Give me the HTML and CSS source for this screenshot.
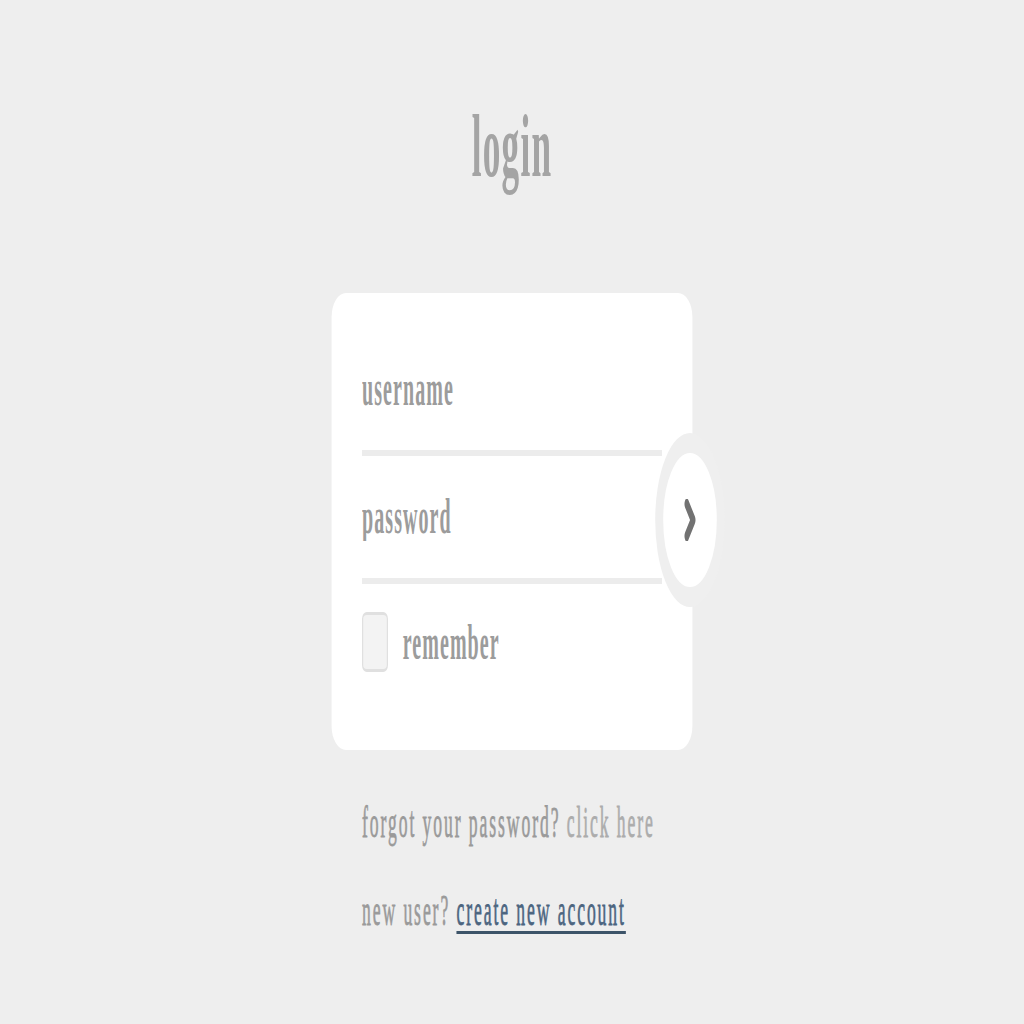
FILE: index.html
```html
<!DOCTYPE html>
<html lang="en">
<head>
<meta charset="utf-8">
<title>login</title>
<link rel="stylesheet" href="styles.css">
</head>
<body>
<div class="viewport">
<div class="stage">
  <h1 class="title">login</h1>
  <form class="card">
    <div class="field"><input class="input" type="text" placeholder="username"></div>
    <div class="field"><input class="input" type="password" placeholder="password"></div>
    <label class="remember"><input class="check" type="checkbox"><span class="remember-text">remember</span></label>
    <button class="go" type="button" aria-label="sign in">
      <svg class="chev" viewBox="0 0 32 42" width="32" height="42"><polyline points="8,5 24,21 8,37" fill="none" stroke="#727272" stroke-width="11" stroke-linecap="round" stroke-linejoin="round"/></svg>
    </button>
  </form>
  <div class="foot">
    <p class="foot-line">forgot your password? <a class="soft" href="#">click here</a></p>
    <p class="foot-line">new user? <a class="link" href="#">create new account</a></p>
  </div>
</div>
</div>
</body>
</html>
```
FILE: styles.css
```css
html, body {
  margin: 0;
  padding: 0;
  overflow: hidden;
  background: #eeeeee;
}
body {
  font-family: "Liberation Serif", "Times New Roman", serif;
  color: #999999;
}
.viewport {
  width: 1024px;
  height: 1024px;
  overflow: clip;
}
.stage {
  width: 2560px;
  transform: scaleX(0.4);
  transform-origin: 0 0;
  display: flex;
  flex-direction: column;
  align-items: center;
}
.title {
  margin: 103px 0 0;
  font-size: 88px;
  line-height: 1;
  font-weight: bold;
  letter-spacing: 3px;
  color: #a4a4a4;
}
.card {
  position: relative;
  box-sizing: border-box;
  width: 902px;
  margin: 102px 0 0;
  padding: 35px 76px 78px;
  background: #ffffff;
  border-radius: 36px / 24px;
  display: flex;
  flex-direction: column;
}
.field {
  padding: 35px 0 37px;
  border-bottom: 6px solid #ececec;
}
.input {
  display: block;
  width: 100%;
  height: 50px;
  padding: 0;
  margin: 0;
  border: 0;
  outline: none;
  background: transparent;
  font-family: inherit;
  font-size: 50px;
  font-weight: bold;
  line-height: 1;
  letter-spacing: 2.7px;
  color: #888888;
}
.input::placeholder {
  color: #9c9c9c;
  opacity: 1;
}
.remember {
  margin-top: 28px;
  height: 60px;
  display: flex;
  align-items: center;
  gap: 37px;
}
.check {
  appearance: none;
  -webkit-appearance: none;
  box-sizing: border-box;
  margin: 0;
  width: 65px;
  height: 60px;
  border: 3px solid #e0e0e0;
  border-radius: 12px / 7px;
  background: #f3f3f3;
}
.remember-text {
  font-size: 50px;
  font-weight: bold;
  line-height: 1;
  letter-spacing: 2.6px;
  color: #9c9c9c;
}
.go {
  position: absolute;
  left: 809px;
  top: 140px;
  box-sizing: border-box;
  width: 174px;
  height: 174px;
  padding: 0;
  border: 20px solid #efefef;
  border-radius: 50%;
  background: #ffffff;
  display: flex;
  align-items: center;
  justify-content: center;
}
.chev {
  display: block;
}
.foot {
  box-sizing: border-box;
  width: 902px;
  padding: 0 76px;
  margin-top: 51px;
}
.foot-line {
  margin: 0 0 44px;
  font-size: 44px;
  line-height: 1;
  letter-spacing: 4.8px;
  color: #9a9a9a;
  -webkit-text-stroke: 0.8px currentColor;
}
.soft {
  color: #acacac;
  text-decoration: none;
}
.link {
  color: #4c6580;
  text-decoration: underline;
  text-decoration-color: #3d5469;
  text-decoration-thickness: 3px;
  text-underline-offset: 6px;
}
```
